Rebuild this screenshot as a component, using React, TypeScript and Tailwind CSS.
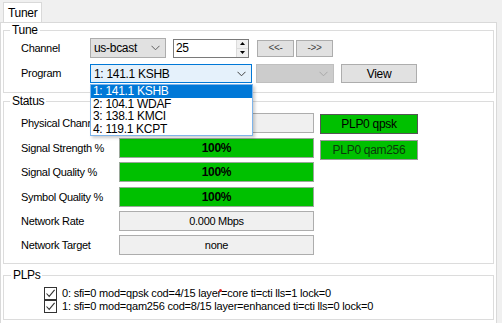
import React from "react";

const statusRows = [
  { label: "Physical Channel", value: "", kind: "gray" },
  { label: "Signal Strength %", value: "100%", kind: "green" },
  { label: "Signal Quality %", value: "100%", kind: "green" },
  { label: "Symbol Quality %", value: "100%", kind: "green" },
  { label: "Network Rate", value: "0.000 Mbps", kind: "gray" },
  { label: "Network Target", value: "none", kind: "gray" },
];

const programs = ["1: 141.1 KSHB", "2: 104.1 WDAF", "3: 138.1 KMCI", "4: 119.1 KCPT"];

const plps = [
  "0: sfi=0 mod=qpsk cod=4/15 layer=core ti=cti lls=1 lock=0",
  "1: sfi=0 mod=qam256 cod=8/15 layer=enhanced ti=cti lls=0 lock=0",
];

function Chevron({ color = "#606060" }: { color?: string }) {
  return (
    <svg width="9" height="6" viewBox="0 0 9 6" className="shrink-0">
      <polyline points="0.5,0.8 4.5,4.8 8.5,0.8" fill="none" stroke={color} strokeWidth="1" />
    </svg>
  );
}

function Check() {
  return (
    <div className="w-[13px] h-[13px] border border-[#333333] bg-white flex items-center justify-center shrink-0">
      <svg width="11" height="11" viewBox="0 0 11 11">
        <polyline points="1.5,5.5 4.2,8.4 9.6,1.8" fill="none" stroke="#333333" strokeWidth="1.1" />
      </svg>
    </div>
  );
}

export default function App() {
  return (
    <div className="w-[502px] h-[323px] bg-[#f0f0f0] overflow-hidden relative text-[11px] text-black font-['Liberation_Sans',sans-serif] tracking-[-0.3px]">
      <div className="h-[22px] flex items-end pl-[3px]">
        <div className="h-[20px] bg-white border border-b-0 border-[#d9d9d9] px-[4px] pt-[3px] text-[12px] leading-[14px]">
          Tuner
        </div>
      </div>
      <div className="w-[497px] h-[301px] bg-white border border-[#d9d9d9] border-b-0 px-[2px]">
        <fieldset className="border border-[#dcdcdc] h-[70px] p-0">
          <legend className="ml-[6px] px-[2px] text-[12px] leading-[14px]">Tune</legend>
          <div className="pl-[17px]">
            <div className="flex items-center h-[20px] mt-[1px]">
              <span className="w-[69px]">Channel</span>
              <div className="w-[76px] h-[20px] bg-[#e1e1e1] border border-[#adadad] flex items-center justify-between pl-[3px] pr-[5px]">
                <span className="text-[12px]">us-bcast</span>
                <Chevron />
              </div>
              <div className="ml-[7px] w-[76px] h-[19px] bg-white border border-[#7a7a7a] flex items-center">
                <span className="flex-1 pl-[2px] text-[12px]">25</span>
                <div className="w-[12px] h-full flex flex-col border-l border-[#dcdcdc]">
                  <div className="flex-1 bg-[#f0f0f0] flex items-center justify-center border-b border-[#dcdcdc]">
                    <svg width="5" height="3" viewBox="0 0 5 3"><polygon points="2.5,0 5,3 0,3" fill="#000" /></svg>
                  </div>
                  <div className="flex-1 bg-[#f0f0f0] flex items-center justify-center">
                    <svg width="5" height="3" viewBox="0 0 5 3"><polygon points="0,0 5,0 2.5,3" fill="#000" /></svg>
                  </div>
                </div>
              </div>
              <button className="ml-[8px] w-[37px] h-[17px] bg-[#e1e1e1] border border-[#adadad] text-[10px] text-[#444] leading-none">
                &lt;&lt;-
              </button>
              <button className="ml-[2px] w-[37px] h-[17px] bg-[#e1e1e1] border border-[#adadad] text-[10px] text-[#444] leading-none">
                -&gt;&gt;
              </button>
            </div>
            <div className="flex items-center h-[19px] mt-[6px]">
              <span className="w-[69px]">Program</span>
              <div className="relative">
                <div className="w-[162px] h-[19px] bg-[#e5f1fb] border border-[#0078d7] flex items-center justify-between pl-[3px] pr-[5px]">
                  <span className="text-[12px]">1: 141.1 KSHB</span>
                  <Chevron color="#404040" />
                </div>
                <div className="absolute left-0 top-[20px] w-[163px] bg-white border border-[#7eb4ea] shadow-[2px_2px_3px_rgba(0,0,0,0.2)] z-10">
                  {programs.map((p, i) => (
                    <div
                      key={p}
                      className={
                        "h-[12.5px] leading-[12.5px] pl-[2px] text-[12px] " +
                        (i === 0 ? "bg-[#0078d7] text-white" : "")
                      }
                    >
                      {p}
                    </div>
                  ))}
                </div>
              </div>
              <div className="ml-[4px] w-[78px] h-[19px] bg-[#cccccc] border border-[#bfbfbf] flex items-center justify-end pr-[5px]">
                <Chevron color="#a8a8a8" />
              </div>
              <button className="ml-[7px] w-[76px] h-[19px] bg-[#e1e1e1] border border-[#adadad] text-[12px] leading-none">
                View
              </button>
            </div>
          </div>
        </fieldset>

        <fieldset className="border border-[#dcdcdc] mt-[1px] h-[170px] p-0">
          <legend className="ml-[6px] px-[2px] text-[12px] leading-[14px]">Status</legend>
          <div className="mt-[5px] pl-[17px] flex flex-col">
            {statusRows.map((r, i) => (
              <div
                key={r.label}
                className={
                  "flex items-start h-[20px] " +
                  (i === 0 ? "" : i === 1 || i === 3 ? "mt-[5px]" : "mt-[4px]")
                }
              >
                <span className="w-[98px] h-[20px] leading-[20px] whitespace-nowrap overflow-hidden">{r.label}</span>
                <div
                  className={
                    "w-[195px] h-[20px] border flex items-center justify-center " +
                    (r.kind === "green"
                      ? "bg-[#00c000] border-[#9aa89a] font-bold text-[12px]"
                      : "bg-[#f0f0f0] border-[#adadad] text-[11px]")
                  }
                >
                  {r.value}
                </div>
                {i === 0 && (
                  <div className="ml-[6px] mt-[1px] w-[98px] h-[20px] bg-[#00c000] border border-[#555555] flex items-center justify-center text-[12px]">
                    PLP0 qpsk
                  </div>
                )}
                {i === 1 && (
                  <div className="ml-[6px] mt-[2px] w-[98px] h-[20px] bg-[#00c000] border border-[#9a9a9a] flex items-center justify-center text-[12px] text-[#0a3a0a]">
                    PLP0 qam256
                  </div>
                )}
              </div>
            ))}
          </div>
        </fieldset>

        <fieldset className="border border-[#dcdcdc] mt-[4px] h-[52px] p-0">
          <legend className="ml-[7px] px-[2px] text-[12px] leading-[14px]">PLPs</legend>
          <div className="mt-[5px] pl-[40px] flex flex-col">
            {plps.map((p) => (
              <div key={p} className="flex items-center h-[13px]">
                <Check />
                <span className="ml-[5px] text-[11px] tracking-[-0.2px] whitespace-nowrap">{p}</span>
              </div>
            ))}
          </div>
        </fieldset>
      </div>
      <span className="absolute left-[219px] top-[289px] w-[3px] h-[3px] rounded-full bg-[#e02020]" />
    </div>
  );
}
